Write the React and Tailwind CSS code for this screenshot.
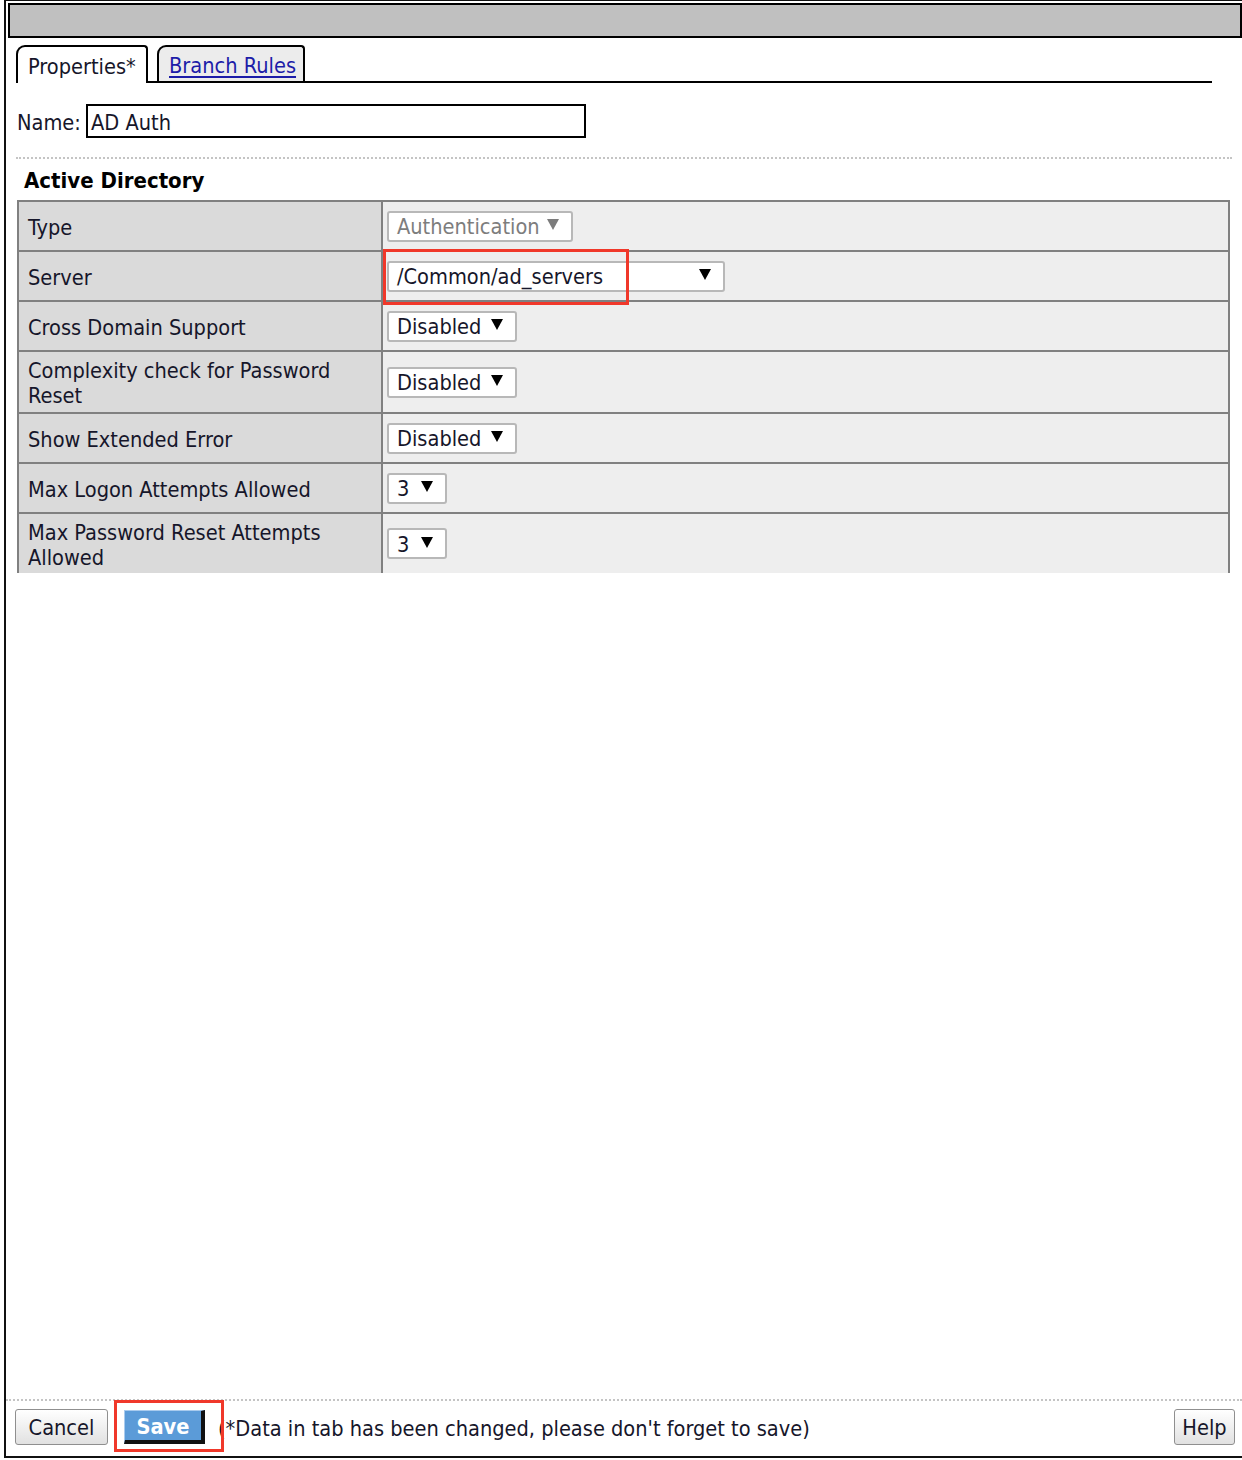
import React from "react";

// Small down-pointing triangle used on the select boxes
function Caret({ muted }) {
  return (
    <svg width="12" height="11" viewBox="0 0 12 11" className="shrink-0 -mt-[3px]">
      <polygon points="0,0 12,0 6,11" fill={muted ? "#7c7c7c" : "#000"} />
    </svg>
  );
}

function Select({ value, width, disabled }) {
  return (
    <div
      className={`flex items-center justify-between h-[31px] pl-[8px] pr-[12px] bg-white border-2 border-[#b8b8b8] rounded-[3px] ${width}`}
    >
      <span className={`pt-[3px] ${disabled ? "text-[#7d7d7d]" : "text-[#16162a]"}`}>{value}</span>
      <Caret muted={disabled} />
    </div>
  );
}

const rows = [
  { label: ["Type"], height: "h-[50px]", select: { value: "Authentication", width: "w-[186px]", disabled: true } },
  { label: ["Server"], height: "h-[50px]", select: { value: "/Common/ad_servers", width: "w-[338px]" }, marked: true },
  { label: ["Cross Domain Support"], height: "h-[50px]", select: { value: "Disabled", width: "w-[130px]" } },
  { label: ["Complexity check for Password", "Reset"], height: "h-[62px]", select: { value: "Disabled", width: "w-[130px]" } },
  { label: ["Show Extended Error"], height: "h-[50px]", select: { value: "Disabled", width: "w-[130px]" } },
  { label: ["Max Logon Attempts Allowed"], height: "h-[50px]", select: { value: "3", width: "w-[60px]" } },
  { label: ["Max Password Reset Attempts", "Allowed"], height: "h-[61px]", select: { value: "3", width: "w-[60px]" } },
];

function PropertyRow({ row }) {
  return (
    <div className={`flex border-t-2 border-[#808080] ${row.height}`}>
      <div className="w-[364px] shrink-0 flex flex-col justify-center pl-[9px] pt-[2px] bg-[#dadada] border-r-2 border-[#808080] leading-[25px]">
        {row.label.map((line) => (
          <span key={line}>{line}</span>
        ))}
      </div>
      <div className="relative flex-1 flex items-center pl-[4px] bg-[#eeeeee]">
        <Select {...row.select} />
        {row.marked && (
          <div className="absolute left-0 -top-[3px] w-[246px] h-[56px] border-[3px] border-[#f0382a] z-10" />
        )}
      </div>
    </div>
  );
}

function GreyButton({ children, width }) {
  return (
    <div
      className={`flex items-center justify-center pt-[3px] h-[36px] ${width} rounded-[3px] border border-[#8f8f8f] bg-gradient-to-b from-white to-[#e1e1e1] text-[#16162a]`}
    >
      {children}
    </div>
  );
}

export default function App() {
  return (
    <div className="w-[1242px] h-[1460px] overflow-hidden bg-white pl-[4px] text-[21.6px] text-[#16162a] font-['DejaVu_Sans_Condensed','DejaVu_Sans',sans-serif]">
      <div className="h-[1458px] flex flex-col border-l-2 border-t border-b-2 border-[#111]">
        {/* window title bar */}
        <div className="ml-[2px] mt-[2px] h-[35px] shrink-0 bg-[#c0c0c0] border-2 border-black" />

        {/* tabs */}
        <div className="mt-[7px] ml-[10px] w-[1196px] h-[38px] shrink-0 flex items-end gap-[9px] border-b-2 border-black">
          <div className="-mb-[2px] h-[38px] w-[132px] flex items-center pl-[10px] pt-[5px] bg-white border-2 border-b-0 border-black rounded-tl-[9px] rounded-tr-[4px] z-10">
            Properties*
          </div>
          <div className="h-[36px] w-[148px] flex items-center pl-[10px] pt-[5px] bg-[#ececec] border-2 border-b-0 border-black rounded-tl-[9px] rounded-tr-[4px]">
            <span className="text-[#1c1ca8] underline underline-offset-[3px]">Branch Rules</span>
          </div>
        </div>

        {/* name field */}
        <div className="mt-[21px] h-[34px] shrink-0 flex items-center pl-[11px]">
          <span className="w-[69px] pt-[4px]">Name:</span>
          <div className="w-[500px] h-[34px] flex items-center pl-[3px] pt-[4px] border-2 border-black">AD Auth</div>
        </div>

        <div className="mt-[19px] ml-[10px] w-[1216px] border-t-2 border-dotted border-[#c4c4c4]" />

        <div className="mt-[9px] pl-[18px] pt-[1px] text-[22px] font-bold leading-[24px] text-black">Active Directory</div>

        {/* property table */}
        <div className="mt-[7px] ml-[11px] w-[1213px] border-x-2 border-[#808080]">
          {rows.map((row) => (
            <PropertyRow key={row.label[0]} row={row} />
          ))}
        </div>

        <div className="flex-1" />

        {/* footer */}
        <div className="border-t-2 border-dotted border-[#c4c4c4]" />
        <div className="mt-[8px] mb-[11px] h-[36px] flex items-center pl-[9px] pr-[7px]">
          <GreyButton width="w-[93px]">Cancel</GreyButton>
          <div className="relative ml-[16px]">
            <div className="w-[81px] h-[34px] flex items-center justify-center pt-[3px] bg-[#5b9bd8] border-t border-l border-[#a9cbee] border-r-[4px] border-b-[4px] border-r-[#111] border-b-[#111] text-white font-bold">
              Save
            </div>
            <div className="absolute -left-[10px] -top-[10px] w-[110px] h-[52px] border-[3px] border-[#f0382a] z-10" />
          </div>
          <span className="ml-[13px] pt-[4px]">(*Data in tab has been changed, please don't forget to save)</span>
          <div className="ml-auto">
            <GreyButton width="w-[61px]">Help</GreyButton>
          </div>
        </div>
      </div>
    </div>
  );
}
